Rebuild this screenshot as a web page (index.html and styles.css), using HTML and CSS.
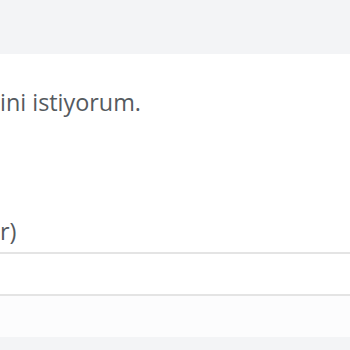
FILE: index.html
```html
<!DOCTYPE html>
<html lang="tr">
<head>
<meta charset="utf-8">
<link rel="stylesheet" href="styles.css">
</head>
<body>
<div class="top-bar"></div>
<main class="content">
  <p class="consent">ini istiyorum.</p>
  <label class="field-label" for="f1">r)</label>
  <input class="field-input" id="f1" type="text">
</main>
<div class="footer-pad"></div>
<div class="bottom-bar"></div>
</body>
</html>
```
FILE: styles.css
```css
html, body {
  margin: 0;
  padding: 0;
  background: #ffffff;
  font-family: "Open Sans", "Noto Sans", sans-serif;
  color: #555a60;
}
.top-bar {
  height: 54px;
  background: #f3f4f6;
}
.content {
  display: flex;
  flex-direction: column;
}
.consent {
  margin: 33px 0 0 0;
  font-size: 23.4px;
  line-height: 30px;
}
.field-label {
  margin-top: 99px;
  font-size: 23.4px;
  line-height: 30px;
}
.field-input {
  display: block;
  box-sizing: border-box;
  margin: 6px 0 0 0;
  width: 100%;
  height: 44px;
  border: 0;
  border-top: 2px solid #e4e4e4;
  border-bottom: 2px solid #e4e4e4;
  background: #ffffff;
  outline: none;
}
.footer-pad {
  height: 41px;
  background: #fcfcfd;
}
.bottom-bar {
  height: 20px;
  background: #f3f4f6;
}
```
